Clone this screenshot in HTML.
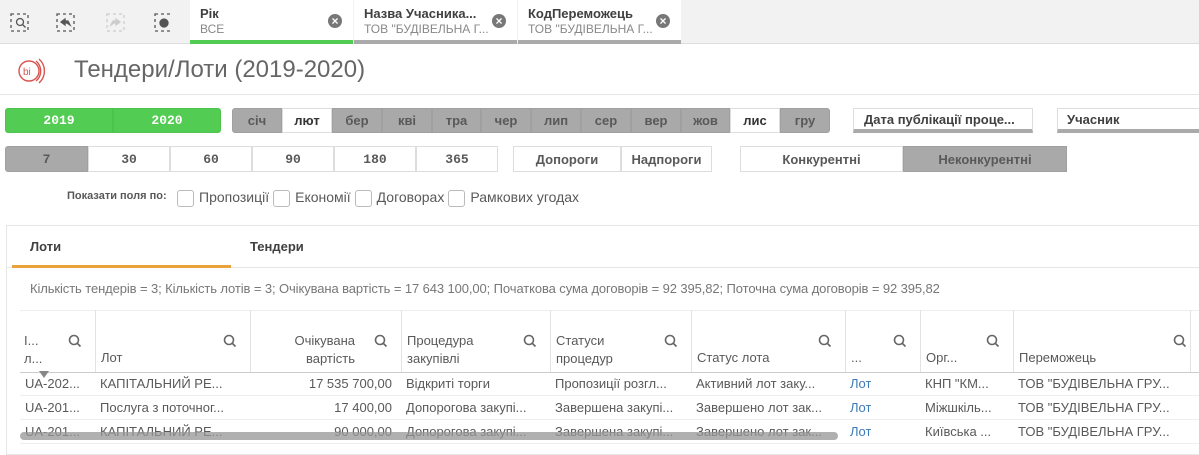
<!DOCTYPE html>
<html><head><meta charset="utf-8"><style>
*{box-sizing:border-box;margin:0;padding:0}
body{width:1199px;height:447px;overflow:hidden;background:#fff;font-family:"Liberation Sans",sans-serif;position:relative;color:#404040}
.a{position:absolute}
.btn{position:absolute;display:flex;align-items:center;justify-content:center;font-size:13px;font-weight:bold;color:#595959;border:1px solid #ddd}
.g{background:#a9a9a9;border-color:#a0a0a0}
.w{background:#fff}
.mono{font-family:"Liberation Mono",monospace}
.th{position:absolute;top:310px;height:62px;border-left:1px solid #e3e3e3;font-size:13px;color:#595959;padding:0 5px}
.cell{position:absolute;font-size:13px;color:#595959;white-space:nowrap;overflow:hidden}
.cb{display:inline-block;width:17px;height:17px;border:1px solid #bbb;border-radius:3px;vertical-align:middle;margin:0 5px 0 4px}
.x{position:absolute;top:14px;width:14px;height:14px;border-radius:50%;background:#777;color:#fff;font-size:12px;line-height:14px;text-align:center;font-weight:bold}
</style></head><body>
<div class="a" style="left:0;top:0;width:1199px;height:44px;background:#f2f2f2;border-bottom:1px solid #ddd"></div>
<div class="a" style="left:565px;top:0;width:110px;height:3px;background:#f0c060"></div>
<svg class="a" style="left:10px;top:12px" width="160" height="22" viewBox="0 0 160 22" fill="none" stroke="#555" stroke-width="1.3">
<rect x="1" y="2" width="17" height="17" stroke-dasharray="3 3"/><circle cx="10" cy="10" r="3.5"/><path d="M12.5 12.5l3 3"/>
<rect x="47" y="2" width="17" height="17" stroke-dasharray="3 3"/><path d="M51 10l4-3v2h3l2 4-3-2h-2v2z" fill="#555"/>
<rect x="97" y="2" width="17" height="17" stroke="#ccc" stroke-dasharray="3 3"/><path d="M110 10l-4-3v2h-3l-2 4 3-2h2v2z" fill="#ccc" stroke="#ccc"/>
<rect x="145" y="2" width="17" height="17" stroke-dasharray="3 3"/><circle cx="154" cy="11" r="4" fill="#555"/>
</svg>
<div class="a" style="left:190px;top:0;width:163px;height:44px;background:#fff;border-bottom:4px solid #52cc52;padding:6px 10px;font-size:13px"><b style="color:#404040">Рік</b><br><span style="font-size:12px;color:#888">ВСЕ</span></div>
<div class="a" style="left:354px;top:0;width:163px;height:44px;background:#fff;border-bottom:4px solid #aaa;padding:6px 10px;font-size:13px;white-space:nowrap"><b>Назва Учасника...</b><br><span style="font-size:12px;color:#888">ТОВ "БУДІВЕЛЬНА Г...</span></div>
<div class="a" style="left:518px;top:0;width:163px;height:44px;background:#fff;border-bottom:4px solid #aaa;padding:6px 10px;font-size:13px;white-space:nowrap"><b>КодПереможець</b><br><span style="font-size:12px;color:#888">ТОВ "БУДІВЕЛЬНА Г...</span></div>
<div class="x" style="left:328px">×</div>
<div class="x" style="left:492px">×</div>
<div class="x" style="left:656px">×</div>
<svg class="a" style="left:14px;top:55px" width="34" height="32" viewBox="0 0 34 32" fill="none" stroke="#d9534f" stroke-width="1.4">
<circle cx="15" cy="16" r="10"/><path d="M22 6a13 13 0 0 1 0 20M25 4a16 16 0 0 1 0 24"/>
<text x="9" y="20" font-size="10" fill="#d9534f" stroke="none" font-family="Liberation Sans">bi</text></svg>
<div class="a" style="left:74px;top:56px;font-size:24px;color:#666;font-family:'Liberation Sans Narrow','Liberation Sans',sans-serif">Тендери/Лоти (2019-2020)</div>
<div class="a" style="left:0;top:94px;width:1199px;height:1px;background:#e6e6e6"></div>
<div class="btn mono" style="left:5px;top:108px;width:108px;height:25px;background:#52cc52;border-color:#4cc34c;color:#fff;border-radius:3px 0 0 3px">2019</div>
<div class="btn mono" style="left:113px;top:108px;width:108px;height:25px;background:#52cc52;border-color:#4cc34c;color:#fff;border-radius:0 3px 3px 0">2020</div>
<div class="btn g" style="left:232px;top:108px;width:50px;height:25px;border-radius:3px 0 0 3px">січ</div>
<div class="btn w" style="left:282px;top:108px;width:50px;height:25px;color:#333">лют</div>
<div class="btn g" style="left:332px;top:108px;width:50px;height:25px">бер</div>
<div class="btn g" style="left:382px;top:108px;width:50px;height:25px">кві</div>
<div class="btn g" style="left:432px;top:108px;width:49px;height:25px">тра</div>
<div class="btn g" style="left:481px;top:108px;width:50px;height:25px">чер</div>
<div class="btn g" style="left:531px;top:108px;width:50px;height:25px">лип</div>
<div class="btn g" style="left:581px;top:108px;width:50px;height:25px">сер</div>
<div class="btn g" style="left:631px;top:108px;width:50px;height:25px">вер</div>
<div class="btn g" style="left:681px;top:108px;width:49px;height:25px">жов</div>
<div class="btn w" style="left:730px;top:108px;width:50px;height:25px;color:#333">лис</div>
<div class="btn g" style="left:780px;top:108px;width:50px;height:25px;border-radius:0 3px 3px 0">гру</div>
<div class="a" style="left:853px;top:108px;width:180px;height:25px;border:1px solid #ddd;border-bottom:4px solid #aaa;font-size:13px;font-weight:bold;color:#404040;padding:3px 10px">Дата публікації проце...</div>
<div class="a" style="left:1057px;top:108px;width:150px;height:25px;border:1px solid #ddd;border-bottom:4px solid #aaa;font-size:13px;font-weight:bold;color:#404040;padding:3px 9px">Учасник</div>
<div class="btn g mono" style="left:5px;top:146px;width:83px;height:26px;border-radius:3px 0 0 3px">7</div>
<div class="btn w mono" style="left:88px;top:146px;width:82px;height:26px">30</div>
<div class="btn w mono" style="left:170px;top:146px;width:82px;height:26px">60</div>
<div class="btn w mono" style="left:252px;top:146px;width:82px;height:26px">90</div>
<div class="btn w mono" style="left:334px;top:146px;width:82px;height:26px">180</div>
<div class="btn w mono" style="left:416px;top:146px;width:82px;height:26px">365</div>
<div class="btn w" style="left:513px;top:146px;width:108px;height:26px">Допороги</div>
<div class="btn w" style="left:621px;top:146px;width:91px;height:26px">Надпороги</div>
<div class="btn w" style="left:740px;top:146px;width:163px;height:26px">Конкурентні</div>
<div class="btn g" style="left:903px;top:146px;width:164px;height:26px">Неконкурентні</div>
<div class="a" style="left:67px;top:190px;font-size:11px;font-weight:bold;color:#595959;font-family:'Liberation Sans Narrow','Liberation Sans',sans-serif">Показати поля по:</div>
<div class="a" style="left:173px;top:189px;font-size:14px;color:#595959;white-space:nowrap"><span class="cb"></span>Пропозиції<span class="cb"></span>Економії<span class="cb"></span>Договорах<span class="cb"></span>Рамкових угодах</div>
<div class="a" style="left:6px;top:225px;width:1200px;height:230px;border:1px solid #e6e6e6"></div>
<div class="a" style="left:30px;top:239px;font-size:13px;font-weight:bold;color:#404040">Лоти</div>
<div class="a" style="left:250px;top:239px;font-size:13px;font-weight:bold;color:#404040">Тендери</div>
<div class="a" style="left:7px;top:267px;width:1192px;height:1px;background:#e6e6e6"></div>
<div class="a" style="left:12px;top:265px;width:219px;height:3px;background:#e8a33c"></div>
<div class="a" style="left:30px;top:281px;font-size:13px;color:#777;white-space:nowrap;letter-spacing:-0.1px">Кількість тендерів = 3; Кількість лотів = 3; Очікувана вартість = 17 643 100,00; Початкова сума договорів = 92 395,82; Поточна сума договорів = 92 395,82</div>
<div class="a" style="left:20px;top:310px;width:1179px;height:1px;background:#eee"></div>
<div class="th" style="left:20px;width:75px;border-left:none"><div style="position:absolute;left:4px;top:22px;line-height:18px">І...<br>л...</div></div>
<div class="th" style="left:95px;width:155px"><div style="position:absolute;left:5px;top:40px">Лот</div></div>
<div class="th" style="left:250px;width:151px"><div style="position:absolute;right:46px;top:22px;line-height:18px;text-align:right">Очікувана<br>вартість</div></div>
<div class="th" style="left:401px;width:149px"><div style="position:absolute;left:5px;top:22px;line-height:18px">Процедура<br>закупівлі</div></div>
<div class="th" style="left:550px;width:141px"><div style="position:absolute;left:5px;top:22px;line-height:18px">Статуси<br>процедур</div></div>
<div class="th" style="left:691px;width:154px"><div style="position:absolute;left:5px;top:40px">Статус лота</div></div>
<div class="th" style="left:845px;width:75px"><div style="position:absolute;left:5px;top:40px">...</div></div>
<div class="th" style="left:920px;width:93px"><div style="position:absolute;left:5px;top:40px">Орг...</div></div>
<div class="th" style="left:1013px;width:177px"><div style="position:absolute;left:5px;top:40px">Переможець</div></div>
<div class="th" style="left:1190px;width:20px"></div>
<svg class="a" style="left:0;top:330px" width="1199" height="20" fill="none" stroke="#666" stroke-width="1.6">
<g id="m"><circle cx="74" cy="10" r="4.5"/><path d="M77 13l3.5 3.5"/></g>
<use href="#m" x="155"/><use href="#m" x="306"/><use href="#m" x="455"/><use href="#m" x="596"/><use href="#m" x="750"/><use href="#m" x="825"/><use href="#m" x="918"/><use href="#m" x="1105"/>
</svg>
<div class="a" style="left:20px;top:372px;width:1179px;height:1px;background:#ccc"></div>
<div class="a" style="left:39px;top:371px;width:0;height:0;border-left:5px solid transparent;border-right:5px solid transparent;border-top:7px solid #888"></div>
<div class="a" style="left:20px;top:395px;width:1179px;height:1px;background:#eee"></div>
<div class="a" style="left:20px;top:419px;width:1179px;height:1px;background:#eee"></div>
<div class="a" style="left:20px;top:443px;width:1179px;height:1px;background:#eee"></div>
<div class="cell" style="left:25px;top:376px">UA-202...</div>
<div class="cell" style="left:100px;top:376px">КАПІТАЛЬНИЙ РЕ...</div>
<div class="cell" style="left:250px;top:376px;width:142px;text-align:right">17 535 700,00</div>
<div class="cell" style="left:406px;top:376px">Відкриті торги</div>
<div class="cell" style="left:555px;top:376px">Пропозиції розгл...</div>
<div class="cell" style="left:696px;top:376px">Активний лот заку...</div>
<div class="cell" style="left:850px;top:376px;color:#3d7ab8">Лот</div>
<div class="cell" style="left:925px;top:376px">КНП "КМ...</div>
<div class="cell" style="left:1018px;top:376px">ТОВ "БУДІВЕЛЬНА ГРУ...</div>
<div class="cell" style="left:25px;top:400px">UA-201...</div>
<div class="cell" style="left:100px;top:400px">Послуга з поточног...</div>
<div class="cell" style="left:250px;top:400px;width:142px;text-align:right">17 400,00</div>
<div class="cell" style="left:406px;top:400px">Допорогова закупі...</div>
<div class="cell" style="left:555px;top:400px">Завершена закупі...</div>
<div class="cell" style="left:696px;top:400px">Завершено лот зак...</div>
<div class="cell" style="left:850px;top:400px;color:#3d7ab8">Лот</div>
<div class="cell" style="left:925px;top:400px">Міжшкіль...</div>
<div class="cell" style="left:1018px;top:400px">ТОВ "БУДІВЕЛЬНА ГРУ...</div>
<div class="cell" style="left:25px;top:424px">UA-201...</div>
<div class="cell" style="left:100px;top:424px">КАПІТАЛЬНИЙ РЕ...</div>
<div class="cell" style="left:250px;top:424px;width:142px;text-align:right">90 000,00</div>
<div class="cell" style="left:406px;top:424px">Допорогова закупі...</div>
<div class="cell" style="left:555px;top:424px">Завершена закупі...</div>
<div class="cell" style="left:696px;top:424px">Завершено лот зак...</div>
<div class="cell" style="left:850px;top:424px;color:#3d7ab8">Лот</div>
<div class="cell" style="left:925px;top:424px">Київська ...</div>
<div class="cell" style="left:1018px;top:424px">ТОВ "БУДІВЕЛЬНА ГРУ...</div>
<div class="a" style="left:20px;top:432px;width:818px;height:8px;border-radius:4px;background:rgba(150,150,150,.75)"></div>
</body></html>
